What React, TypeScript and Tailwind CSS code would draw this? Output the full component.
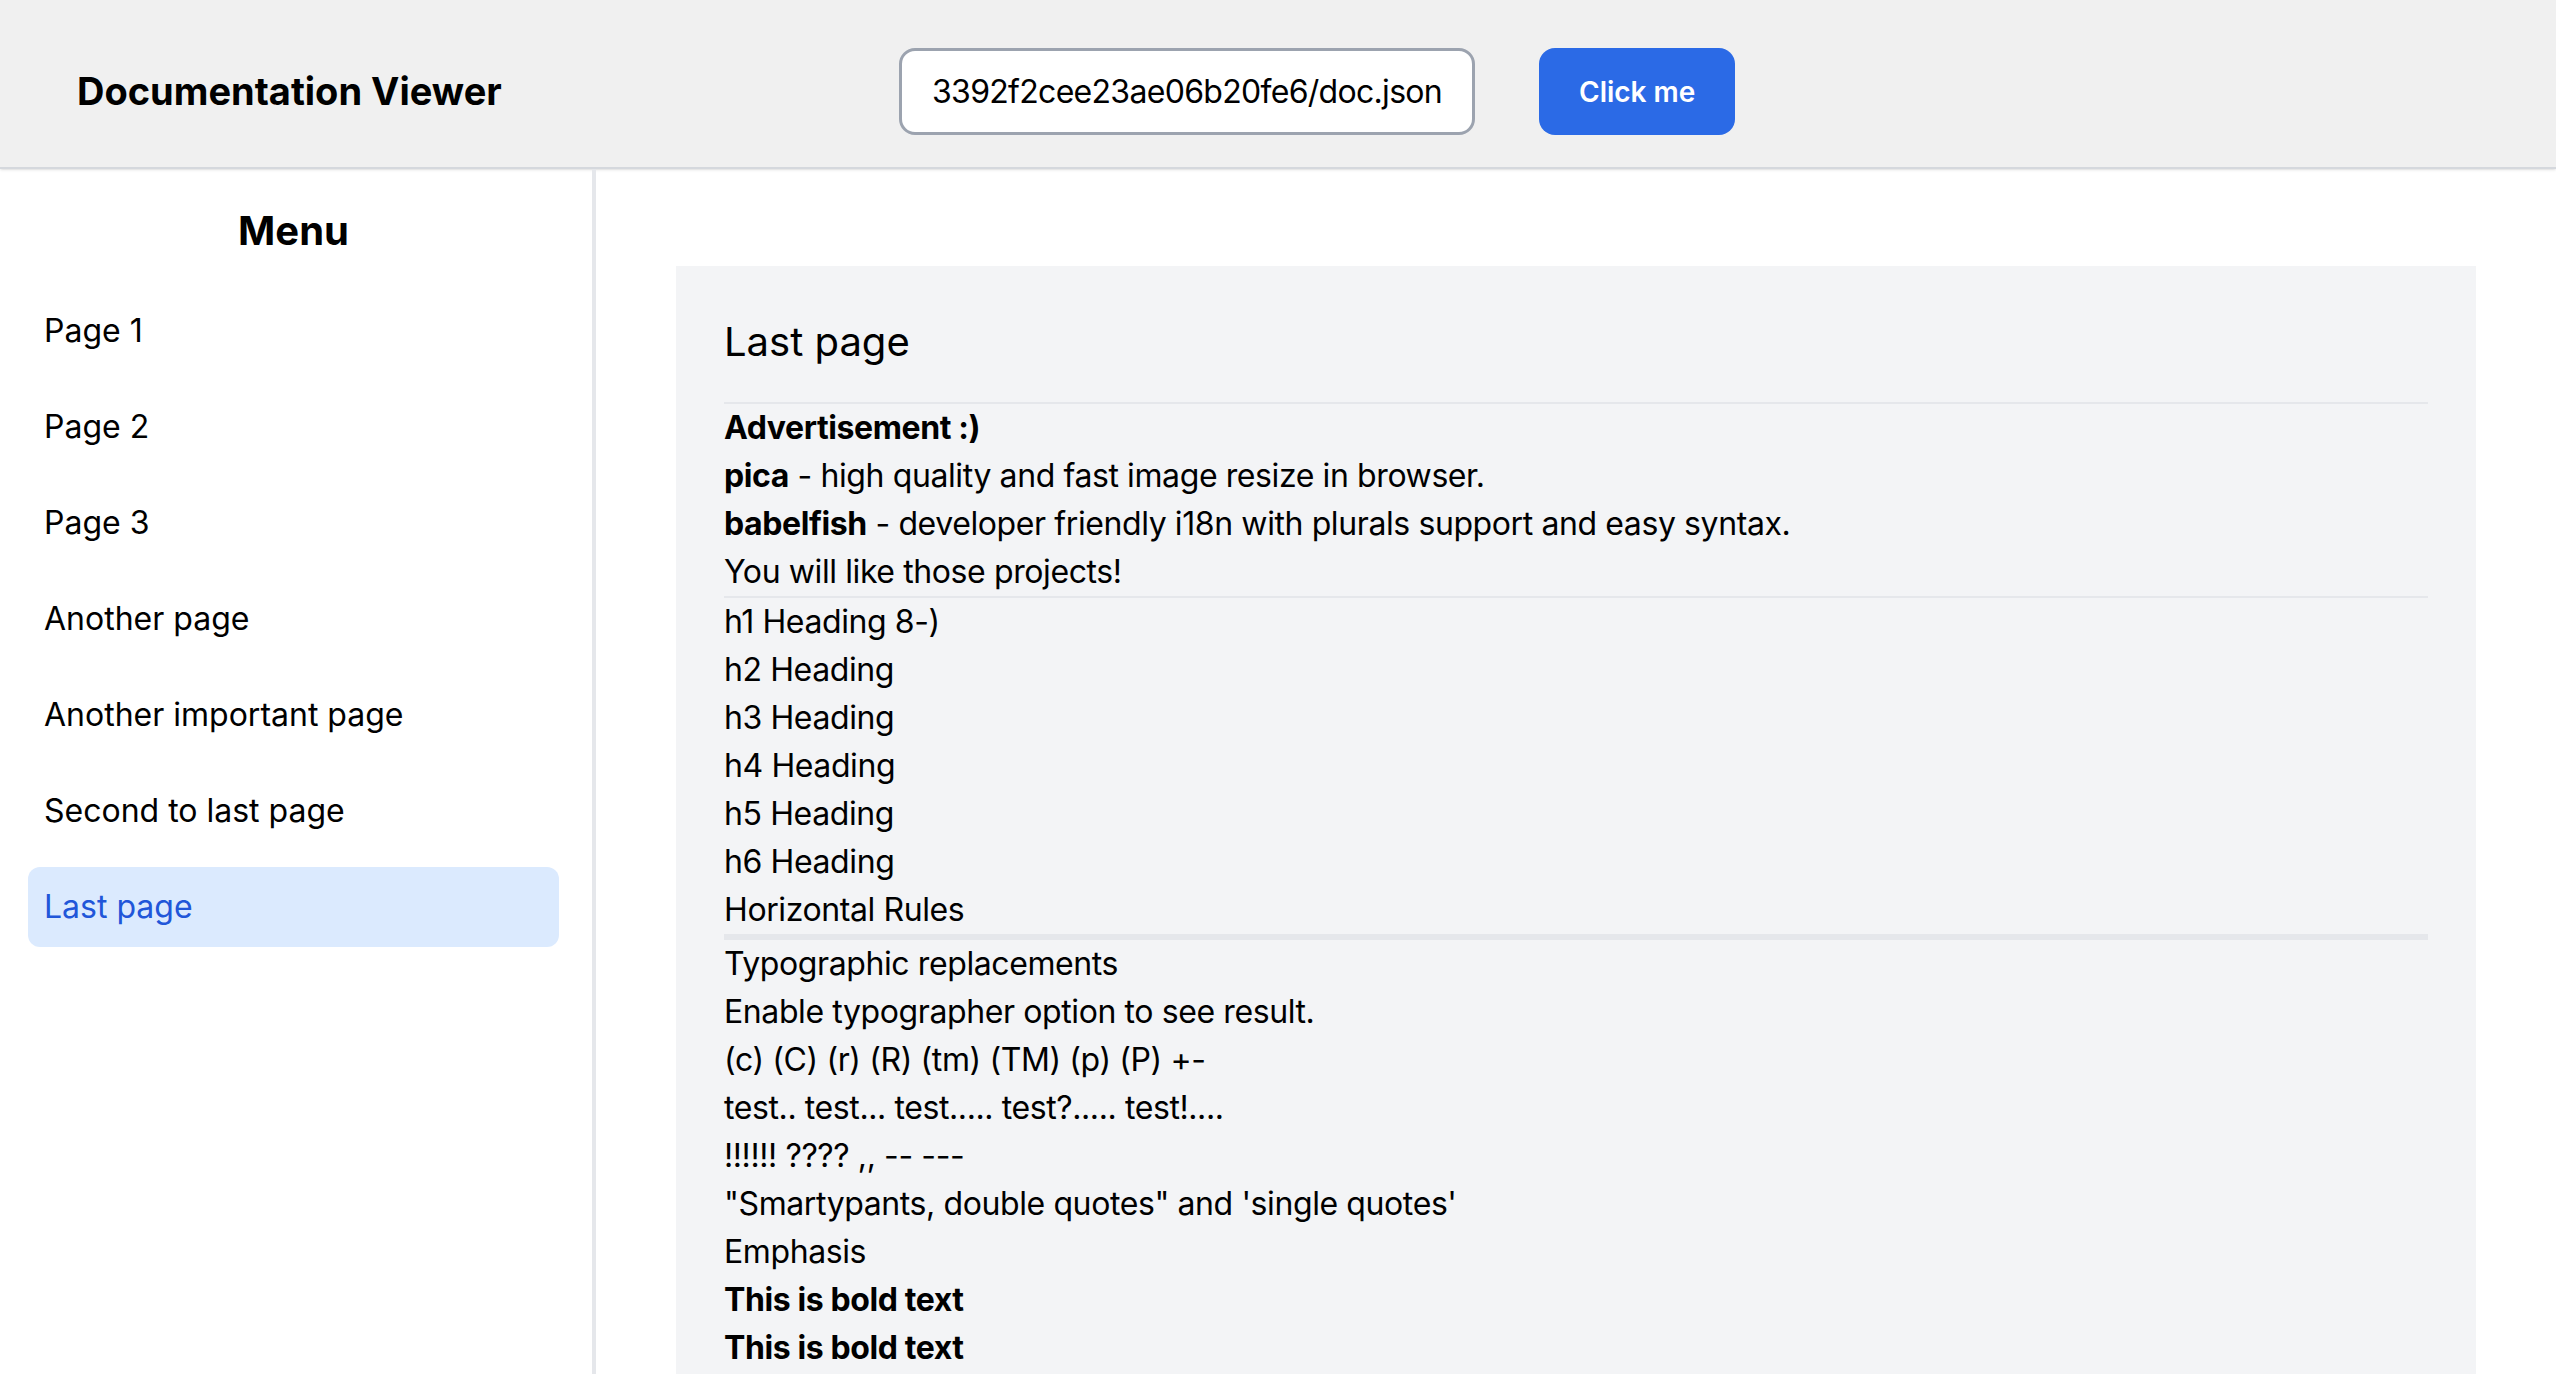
import React, { useState } from 'react';

const pages = [
  'Page 1',
  'Page 2',
  'Page 3',
  'Another page',
  'Another important page',
  'Second to last page',
  'Last page',
];

const Rule: React.FC = () => <hr className="border-0 border-t-2 border-[#e5e7eb]" />;

const LastPage: React.FC = () => (
  <div className="text-[32px] leading-[48px] tracking-[-0.4px]">
    <Rule />
    <p>
      <strong>Advertisement :)</strong>
    </p>
    <ul>
      <li>
        <strong>pica</strong> - high quality and fast image resize in browser.
      </li>
      <li>
        <strong>babelfish</strong> - developer friendly i18n with plurals support and easy syntax.
      </li>
    </ul>
    <p>You will like those projects!</p>
    <Rule />
    <h1>h1 Heading 8-)</h1>
    <h2>h2 Heading</h2>
    <h3>h3 Heading</h3>
    <h4>h4 Heading</h4>
    <h5>h5 Heading</h5>
    <h6>h6 Heading</h6>
    <h2>Horizontal Rules</h2>
    <Rule />
    <Rule />
    <Rule />
    <h2>Typographic replacements</h2>
    <p>Enable typographer option to see result.</p>
    <p>(c) (C) (r) (R) (tm) (TM) (p) (P) +-</p>
    <p>test.. test... test..... test?..... test!....</p>
    <p>!!!!!! ???? ,, -- ---</p>
    <p>"Smartypants, double quotes" and 'single quotes'</p>
    <h2>Emphasis</h2>
    <p>
      <strong>This is bold text</strong>
    </p>
    <p>
      <strong>This is bold text</strong>
    </p>
    <p>
      <em>This is italic text</em>
    </p>
    <p>
      <em>This is italic text</em>
    </p>
    <p>
      <s>Strikethrough</s>
    </p>
    <h2>Blockquotes</h2>
  </div>
);

export default function App() {
  const [active, setActive] = useState('Last page');
  const [url, setUrl] = useState('3392f2cee23ae06b20fe6/doc.json');

  return (
    <div className="min-h-screen flex flex-col bg-white text-black font-['Inter','Noto_Sans',sans-serif]">
      <header className="h-[169px] shrink-0 flex items-center pt-[16px] pl-[77px] bg-[#f0f0f0] border-b-2 border-[#d5d8dd] shadow-sm">
        <h1 className="w-[822px] text-[38px] font-bold">Documentation Viewer</h1>
        <input
          value={url}
          onChange={(e) => setUrl(e.target.value)}
          className="w-[576px] h-[87px] px-[30px] bg-white border-[3px] border-[#9ca3af] rounded-[16px] text-[32px] tracking-[-0.7px] outline-none"
        />
        <button className="ml-[64px] h-[87px] px-[40px] rounded-[16px] bg-[#2b6ae6] text-white text-[28px] font-semibold">
          Click me
        </button>
      </header>

      <div className="flex flex-1">
        <aside className="w-[596px] shrink-0 pt-[34px] pl-[28px] pr-[33px] border-r-4 border-[#e5e7eb]">
          <h2 className="mb-[32px] text-center text-[40px] leading-[56px] font-bold">Menu</h2>
          <ul className="flex flex-col gap-[16px]">
            {pages.map((p) => (
              <li key={p}>
                <button
                  onClick={() => setActive(p)}
                  className={
                    active === p
                      ? 'w-full px-[16px] py-[16px] rounded-[12px] text-left text-[32px] leading-[48px] bg-[#dbeafe] text-[#2156d9]'
                      : 'w-full px-[16px] py-[16px] rounded-[12px] text-left text-[32px] leading-[48px]'
                  }
                >
                  {p}
                </button>
              </li>
            ))}
          </ul>
        </aside>

        <main className="flex-1 pt-[97px] px-[80px] pb-[80px]">
          <div className="p-[48px] bg-[#f3f4f6]">
            <h2 className="mb-[32px] text-[40px] leading-[56px]">{active}</h2>
            {active === 'Last page' ? <LastPage /> : <p className="text-[32px] leading-[48px]">Nothing here yet.</p>}
          </div>
        </main>
      </div>
    </div>
  );
}
